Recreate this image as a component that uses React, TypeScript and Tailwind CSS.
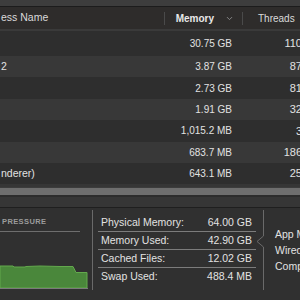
import { ChevronDown } from "lucide-react"

type Row = {
  name: string
  memory: string
  threads: string
}

const rows: Row[] = [
  { name: "", memory: "30.75 GB", threads: "110" },
  { name: "2", memory: "3.87 GB", threads: "87" },
  { name: "", memory: "2.73 GB", threads: "81" },
  { name: "", memory: "1.91 GB", threads: "32" },
  { name: "", memory: "1,015.2 MB", threads: "3" },
  { name: "", memory: "683.7 MB", threads: "186" },
  { name: "nderer)", memory: "643.1 MB", threads: "25" },
]

const stats = [
  { label: "Physical Memory:", value: "64.00 GB" },
  { label: "Memory Used:", value: "42.90 GB" },
  { label: "Cached Files:", value: "12.02 GB" },
  { label: "Swap Used:", value: "488.4 MB" },
]

export default function App() {
  return (
    <div
      className="w-[300px] h-[300px] overflow-hidden bg-[#303030] text-[#e2e2e2] flex flex-col whitespace-nowrap"
      style={{ fontFamily: "'Liberation Sans', Arial, sans-serif" }}
    >
      {/* toolbar edge */}
      <div className="h-[7px] bg-[#3d3d3d] border-b border-[#1c1c1c] shrink-0" />

      {/* column header */}
      <div className="h-[24px] shrink-0 flex items-center bg-[#2e2c2b] text-[10.5px] border-b-2 border-[#3a3a3a] w-[310px]">
        <div className="w-[164px] shrink-0 pl-[1px] text-[#dadada]">ess Name</div>
        <div className="w-[78px] shrink-0 h-[13px] border-l border-[#4a4a4a] flex items-center justify-end pr-[8px] gap-[11px]">
          <span className="font-bold text-[#e8e8e8] text-[10px]">Memory</span>
          <ChevronDown className="w-[9px] h-[9px] text-[#8a8a8a]" strokeWidth={2.5} />
        </div>
        <div className="w-[68px] shrink-0 h-[13px] border-l border-[#4a4a4a] flex items-center pl-[15px] text-[10px] text-[#dadada]">
          Threads
        </div>
      </div>

      {/* process rows */}
      <div className="flex flex-col shrink-0 text-[10px]">
        {rows.map((row, i) => (
          <div
            key={i}
            className={`flex items-center w-[310px] ${i === 0 ? "h-[25px]" : "h-[21.4px]"} ${
              i % 2 === 0 ? "bg-[#2e2e2e]" : "bg-[#383838]"
            }`}
          >
            <div className="w-[164px] shrink-0 pl-[1px] text-[10.5px]">{row.name}</div>
            <div className="w-[78px] shrink-0 text-right pr-[10px]">{row.memory}</div>
            <div className="w-[60px] shrink-0 text-right text-[11px]">{row.threads}</div>
          </div>
        ))}
        {/* partly hidden row under the overlay scrollbar */}
        <div className="h-[22.6px] bg-[#363636] flex flex-col pt-[2.5px]">
          <div className="h-[10px] bg-[#6e6e6e] border-t border-[#3c3c3c] border-b-2 border-b-[#2c2c2c]" />
        </div>
      </div>

      {/* memory summary */}
      <div className="flex-1 border-t border-[#1f1f1f] bg-[#303030] flex pt-[2px] text-[10.5px]">
        <div className="w-[92px] shrink-0 h-[80px] flex flex-col">
          <div className="h-[21px] flex items-end pl-[2px] pb-[4px] text-[7.5px] font-bold tracking-[0.4px] text-[#9c9c9c]">
            PRESSURE
          </div>
          <div className="w-[80px] border-t border-[#6e6e6e]" />
          <svg width="92" height="58" viewBox="0 232 92 58" className="block">
            <polygon
              points="0,266 13,266 14,267 25,267 26,266.5 40,266 60,266.5 73,266.5 76,272.5 87,272.5 87,288 0,288"
              fill="#4a873b"
              stroke="#63a94d"
              strokeWidth="1"
            />
            <line x1="0" y1="288.5" x2="88" y2="288.5" stroke="#7a7a7a" strokeWidth="1" />
          </svg>
        </div>
        <div className="w-px shrink-0 h-[80px] bg-[#6a6a6a]" />
        <div className="w-[163px] shrink-0 pl-[5px] pt-[4px] flex flex-col">
          {stats.map((s, i) => (
            <div
              key={s.label}
              className={`h-[18px] flex items-center justify-between pl-[3px] pr-[4px] ${
                i < stats.length - 1 ? "border-b border-[#7c7c7c]" : ""
              }`}
            >
              <span>{s.label}</span>
              <span>{s.value}</span>
            </div>
          ))}
        </div>
        <svg width="8" height="80" viewBox="0 0 8 80" className="block shrink-0">
          <polyline
            points="7.5,0 7.5,26 1,31.5 7.5,37 7.5,80"
            fill="none"
            stroke="#6a6a6a"
            strokeWidth="1"
          />
        </svg>
        <div className="shrink-0 flex flex-col pl-[11px] pt-[17px] gap-[1px]">
          <div className="h-[15px] leading-[15px]">App Memory:</div>
          <div className="h-[15px] leading-[15px]">Wired Memory:</div>
          <div className="h-[15px] leading-[15px]">Compressed:</div>
        </div>
      </div>
    </div>
  )
}
